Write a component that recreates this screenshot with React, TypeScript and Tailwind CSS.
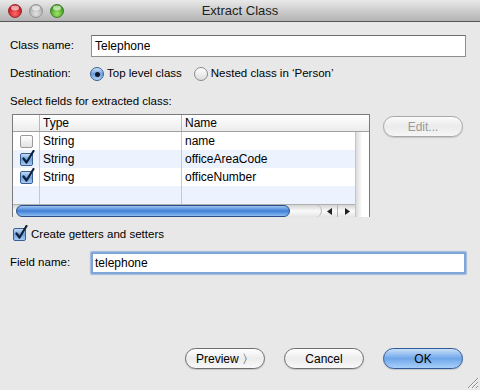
import React from "react";

const font = { fontFamily: '"Liberation Sans", Arial, sans-serif' };

function Light({ c1, c2, c3 }: { c1: string; c2: string; c3: string }) {
  return (
    <svg width="14" height="14" viewBox="0 0 14 14">
      <defs>
        <radialGradient id={"g" + c1.slice(1)} cx="50%" cy="70%" r="60%">
          <stop offset="0" stopColor={c1} />
          <stop offset="1" stopColor={c2} />
        </radialGradient>
      </defs>
      <circle cx="7" cy="7" r="6.5" fill={`url(#g${c1.slice(1)})`} stroke={c3} strokeWidth="0.8" />
      <ellipse cx="7" cy="4" rx="4" ry="2.4" fill="white" opacity="0.6" />
    </svg>
  );
}

function Check({ checked }: { checked: boolean }) {
  return (
    <div className="relative w-[13px] h-[13px]">
      {checked ? (
        <div className="w-[13px] h-[13px] rounded-[2px] border border-[#3a5f93] bg-gradient-to-b from-[#c7dcf5] via-[#6c9fdc] to-[#a9ccf2]" />
      ) : (
        <div className="w-[13px] h-[13px] rounded-[2px] border border-[#9a9a9a] bg-gradient-to-b from-[#ffffff] to-[#e2e2e2]" />
      )}
      {checked && (
        <svg className="absolute left-[1px] top-[-3px]" width="14" height="15" viewBox="0 0 14 15">
          <path d="M2.5 8.5 L5.5 12.5 L12.5 1" fill="none" stroke="#10203a" strokeWidth="2.2" strokeLinecap="round" strokeLinejoin="round" />
        </svg>
      )}
    </div>
  );
}

function Radio({ on }: { on: boolean }) {
  return on ? (
    <div className="w-[14px] h-[14px] rounded-full border border-[#3a5f93] bg-gradient-to-b from-[#cfe2f8] via-[#6a9ddb] to-[#b6d4f4] flex items-center justify-center">
      <div className="w-[5px] h-[5px] rounded-full bg-[#101828]" />
    </div>
  ) : (
    <div className="w-[14px] h-[14px] rounded-full border border-[#8a8a8a] bg-gradient-to-b from-[#ffffff] to-[#dcdcdc]" />
  );
}

function Btn({ children, primary, disabled, w }: { children: React.ReactNode; primary?: boolean; disabled?: boolean; w: string }) {
  const cls = primary
    ? "border-[#2f5a97] bg-gradient-to-b from-[#c9e0fa] via-[#6fa6ea] to-[#a7d0fa] text-black"
    : disabled
    ? "border-[#a8a8a8] bg-gradient-to-b from-[#fbfbfb] via-[#ebebeb] to-[#f6f6f6] text-[#9a9a9a]"
    : "border-[#6e6e6e] bg-gradient-to-b from-[#ffffff] via-[#ececec] to-[#f8f8f8] text-black";
  return (
    <div className={`${w} h-[21px] rounded-full border ${cls} flex items-center justify-center text-[12px] shadow-[0_1px_1px_rgba(0,0,0,0.15)]`}>
      {children}
    </div>
  );
}

const rows = [
  { c: false, t: "String", n: "name" },
  { c: true, t: "String", n: "officeAreaCode" },
  { c: true, t: "String", n: "officeNumber" },
  { c: null, t: "", n: "" },
];

export default function App() {
  return (
    <div className="w-[480px] h-[390px] bg-[#e8e8e8] flex flex-col relative overflow-hidden text-black" style={font}>
      {/* Title bar */}
      <div className="h-[22px] flex items-center relative bg-gradient-to-b from-[#e9e9e9] to-[#b3b3b3] border-b border-[#555]">
        <div className="flex items-center gap-[7px] pl-[8px]">
          <Light c1="#ff6b6b" c2="#c1121a" c3="#8a1a1a" />
          <Light c1="#e3e3e3" c2="#a9a9a9" c3="#8a8a8a" />
          <Light c1="#9fe36b" c2="#3d9a16" c3="#2e6c1a" />
        </div>
        <div className="absolute inset-0 flex items-center justify-center text-[13px] text-[#222] pointer-events-none">
          Extract Class
        </div>
      </div>

      <div className="flex flex-col px-[10px] text-[11.5px]">
        {/* Class name */}
        <div className="flex items-center mt-[13px] h-[22px]">
          <div className="w-[81px]">Class name:</div>
          <div className="flex-1 mr-[4px] h-[22px] bg-white border border-[#8e8e8e] border-t-[#6e6e6e] flex items-center pl-[3px] text-[12px]">
            Telephone
          </div>
        </div>

        {/* Destination */}
        <div className="flex items-center mt-[8px] h-[18px]">
          <div className="w-[80px]">Destination:</div>
          <Radio on />
          <div className="ml-[3px]">Top level class</div>
          <div className="ml-[12px]"><Radio on={false} /></div>
          <div className="ml-[3px]">Nested class in ‘Person’</div>
        </div>

        <div className="mt-[11px] h-[15px] leading-[15px]">Select fields for extracted class:</div>

        {/* Table and Edit */}
        <div className="flex mt-[5px]">
          <div className="ml-[2px] w-[358px] h-[103px] border border-[#7a7a7a] bg-white flex flex-col text-[12px]">
            <div className="h-[17px] flex border-b border-[#a0a0a0] bg-gradient-to-b from-[#ffffff] to-[#ececec]">
              <div className="w-[27px] border-r border-[#b8b8b8]" />
              <div className="w-[142px] border-r border-[#b8b8b8] pl-[3px] leading-[16px]">Type</div>
              <div className="flex-1 pl-[3px] leading-[16px]">Name</div>
            </div>
            <div className="flex flex-1">
              <div className="w-[342px] flex flex-col">
                {rows.map((r, i) => (
                  <div key={i} className={`h-[18px] flex items-center ${i % 2 === 1 ? "bg-[#edf3fe]" : "bg-white"}`}>
                    <div className="w-[27px] h-full border-r border-[#c8c8c8] flex items-center justify-center">
                      {r.c !== null && <Check checked={r.c} />}
                    </div>
                    <div className="w-[142px] h-full border-r border-[#c8c8c8] pl-[3px] flex items-center">{r.t}</div>
                    <div className="flex-1 pl-[3px]">{r.n}</div>
                  </div>
                ))}
                {/* horizontal scrollbar */}
                <div className="flex-1 flex items-center border-t border-[#b0b0b0] bg-gradient-to-b from-[#d4d4d4] via-[#fafafa] to-[#e4e4e4]">
                  <div className="ml-[3px] w-[275px] h-[12px] rounded-full border border-[#2a4f8a] bg-gradient-to-b from-[#9cc3f0] via-[#3f7fd6] to-[#8dbdf2]" />
                  <div className="w-[32px] h-[12px] rounded-r-full border-r border-[#b4b4b4]" />
                  <div className="flex items-center h-full">
                    <div className="w-[16px] h-full flex items-center justify-center border-r border-[#b4b4b4]">
                      <svg width="6" height="7" viewBox="0 0 6 7"><path d="M5 0 L0 3.5 L5 7Z" fill="#222" /></svg>
                    </div>
                    <div className="w-[17px] h-full flex items-center justify-center">
                      <svg width="6" height="7" viewBox="0 0 6 7"><path d="M1 0 L6 3.5 L1 7Z" fill="#222" /></svg>
                    </div>
                  </div>
                </div>
              </div>
              <div className="flex-1 border-l border-[#c4c4c4] bg-gradient-to-r from-[#dcdcdc] via-[#ffffff] to-[#ffffff]" />
            </div>
          </div>
          <div className="ml-[13px] mt-[2px]">
            <Btn disabled w="w-[80px]">Edit...</Btn>
          </div>
        </div>

        {/* Create getters */}
        <div className="flex items-center mt-[10px] ml-[3px] h-[15px]">
          <Check checked />
          <div className="ml-[5px]">Create getters and setters</div>
        </div>

        {/* Field name */}
        <div className="flex items-center mt-[10px] h-[22px]">
          <div className="w-[81px]">Field name:</div>
          <div className="flex-1 mr-[4px] h-[22px] bg-white border-[2px] border-[#7ea6d8] shadow-[0_0_1px_1px_rgba(90,140,210,0.5)] flex items-center pl-[2px] text-[12px] rounded-[1px]">
            telephone
          </div>
        </div>
      </div>

      <div className="flex-1" />

      {/* Buttons */}
      <div className="flex justify-end items-center gap-[19px] pr-[17px] mb-[21px]">
        <Btn w="w-[80px]">Preview 〉</Btn>
        <Btn w="w-[80px]">Cancel</Btn>
        <Btn primary w="w-[80px]">OK</Btn>
      </div>

      {/* Resize grip */}
      <svg className="absolute right-[1px] bottom-[1px]" width="13" height="13" viewBox="0 0 13 13">
        <path d="M12 2 L2 12 M12 6 L6 12 M12 10 L10 12" stroke="#8a8a8a" strokeWidth="1" />
        <path d="M12 3 L3 12 M12 7 L7 12 M12 11 L11 12" stroke="#ffffff" strokeWidth="1" />
      </svg>
    </div>
  );
}
